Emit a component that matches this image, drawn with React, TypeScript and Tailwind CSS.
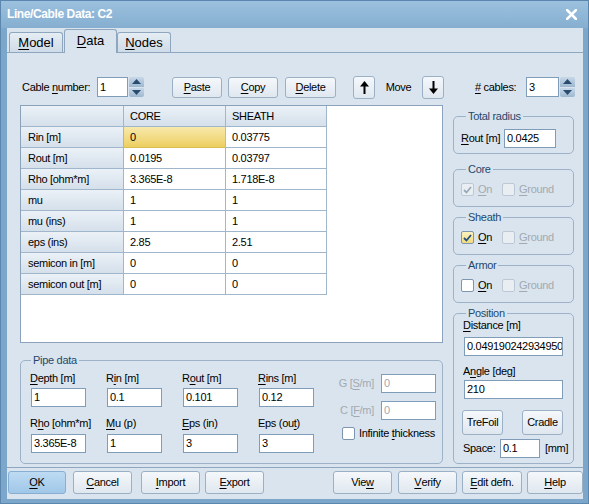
import React from "react";

type Kids = { children?: React.ReactNode };

function U({ children }: Kids) {
  return <span className="underline decoration-1 underline-offset-[2px]">{children}</span>;
}

function Button({
  children,
  className = "",
  primary = false,
}: Kids & { className?: string; primary?: boolean }) {
  return (
    <div
      className={`flex shrink-0 items-center justify-center rounded-[3px] border ${
        primary
          ? "border-[#86afd2] bg-linear-to-b from-[#bddbf3] to-[#a0c7e8]"
          : "border-[#9cb0c5] bg-linear-to-b from-[#f5f8fb] to-[#dfe7ef]"
      } ${className}`}
    >
      {children}
    </div>
  );
}

function Field({
  value,
  className = "",
  disabled = false,
}: {
  value: string;
  className?: string;
  disabled?: boolean;
}) {
  return (
    <div
      className={`flex shrink-0 items-center overflow-hidden whitespace-nowrap border border-[#7f9db9] bg-white pl-[2px] ${
        disabled ? "text-[#a3a9b0]" : "text-black"
      } ${className}`}
    >
      {value}
    </div>
  );
}

function Spinner() {
  return (
    <div className="flex h-[20px] w-[15px] shrink-0 flex-col gap-px">
      <div className="flex flex-1 items-center justify-center rounded-t-[2px] bg-linear-to-b from-[#c8d8e8] to-[#9db8d0]">
        <svg width="9" height="5" viewBox="0 0 9 5">
          <path d="M0 5 L4.5 0 L9 5Z" fill="#2a4c6e" />
        </svg>
      </div>
      <div className="flex flex-1 items-center justify-center rounded-b-[2px] bg-linear-to-b from-[#c8d8e8] to-[#9db8d0]">
        <svg width="9" height="5" viewBox="0 0 9 5">
          <path d="M0 0 L4.5 5 L9 0Z" fill="#2a4c6e" />
        </svg>
      </div>
    </div>
  );
}

function Box({
  checked = false,
  disabled = false,
  yellow = false,
}: {
  checked?: boolean;
  disabled?: boolean;
  yellow?: boolean;
}) {
  const cls = disabled
    ? "border-[#bcc8d4] bg-[#e9eef3]"
    : yellow
      ? "border-[#7d95ae] bg-linear-to-b from-[#fcf2bd] to-[#f1da7c]"
      : "border-[#7d95ae] bg-white";
  return (
    <span
      className={`flex h-[13px] w-[13px] shrink-0 items-center justify-center rounded-[2px] border ${cls}`}
    >
      {checked && (
        <svg width="9" height="8" viewBox="0 0 9 8">
          <path
            d="M1 4 L3.5 6.5 L8 1"
            fill="none"
            stroke={disabled ? "#9aa9b8" : "#254f80"}
            strokeWidth="1.8"
          />
        </svg>
      )}
    </span>
  );
}

function Group({
  title,
  className = "",
  legendClass = "ml-[5px]",
  children,
}: Kids & { title: string; className?: string; legendClass?: string }) {
  return (
    <fieldset className={`shrink-0 rounded-[5px] border border-[#9db2c7] ${className}`}>
      <legend className={`px-[2px] leading-[12px] text-[#24486c] ${legendClass}`}>{title}</legend>
      {children}
    </fieldset>
  );
}

function Arrow({ down = false }: { down?: boolean }) {
  return (
    <svg width="9" height="13" viewBox="0 0 9 13" className={down ? "rotate-180" : ""}>
      <path d="M4.5 0 L9 5.5 L0 5.5Z" fill="#000" />
      <rect x="3.5" y="4" width="2" height="9" fill="#000" />
    </svg>
  );
}

function ConductorRow({ title, on, disabledOn, yellow }: { title: string; on: boolean; disabledOn?: boolean; yellow?: boolean }) {
  return (
    <Group title={title} className="h-[44px] pl-[7px]">
      <div className="mt-[8px] flex h-[13px] items-center">
        <div className="flex w-[41px] items-center">
          <Box checked={on} disabled={disabledOn} yellow={yellow} />
          <span className={`ml-[4px] ${disabledOn ? "text-[#a3a9b0]" : ""}`}>
            <U>O</U>n
          </span>
        </div>
        <Box disabled />
        <span className="ml-[4px] text-[#a3a9b0]">
          <U>G</U>round
        </span>
      </div>
    </Group>
  );
}

const rows = [
  ["Rin [m]", "0", "0.03775"],
  ["Rout [m]", "0.0195", "0.03797"],
  ["Rho [ohm*m]", "3.365E-8", "1.718E-8"],
  ["mu", "1", "1"],
  ["mu (ins)", "1", "1"],
  ["eps (ins)", "2.85", "2.51"],
  ["semicon in [m]", "0", "0"],
  ["semicon out [m]", "0", "0"],
];

function PipeCol({
  top,
  topValue,
  bottom,
  bottomValue,
}: {
  top: React.ReactNode;
  topValue: string;
  bottom: React.ReactNode;
  bottomValue: string;
}) {
  return (
    <div className="flex w-[55px] flex-col">
      <div className="-ml-px h-[12px] whitespace-nowrap leading-[12px]">{top}</div>
      <Field value={topValue} className="mt-[4px] h-[19px] w-[55px]" />
      <div className="-ml-px mt-[10px] h-[12px] whitespace-nowrap leading-[12px]">{bottom}</div>
      <Field value={bottomValue} className="mt-[5px] h-[19px] w-[55px]" />
    </div>
  );
}

export default function App() {
  return (
    <div className="flex h-[504px] w-[589px] flex-col overflow-hidden border border-[#5b86ad] bg-[#7ca6ca] font-['Liberation_Sans',Arial,sans-serif] text-[11px] leading-[13px] tracking-[-0.3px] text-black">
      {/* title bar */}
      <div className="flex h-[27px] shrink-0 items-center justify-between bg-linear-to-b from-[#9cc1de] to-[#85aed0] pl-[6px] pr-[11px]">
        <span className="text-[12px] font-bold tracking-[-0.4px] text-white">Line/Cable Data: C2</span>
        <svg width="11" height="11" viewBox="0 0 11 11">
          <path d="M1 1 L10 10 M10 1 L1 10" stroke="#fff" strokeWidth="2.6" strokeLinecap="square" />
        </svg>
      </div>

      <div className="mb-[4px] ml-[6px] mr-[5px] flex flex-1 flex-col bg-[#dae4ee]">
        {/* tabs */}
        <div className="flex h-[25px] shrink-0 items-end border-b border-[#8ea7bf] pl-[2px] text-[13px] tracking-normal">
          <div className="flex h-[20px] w-[54px] items-center justify-center rounded-t-[3px] border border-b-0 border-[#8ea7bf] bg-linear-to-b from-[#e6edf4] to-[#cfdbe7]">
            <U>M</U>odel
          </div>
          <div className="relative z-10 -mb-px ml-px flex h-[24px] w-[53px] items-center justify-center rounded-t-[3px] border border-b-0 border-[#8ea7bf] bg-[#dae4ee] pb-[2px]">
            <U>D</U>ata
          </div>
          <div className="flex h-[20px] w-[54px] items-center justify-center rounded-t-[3px] border border-b-0 border-[#8ea7bf] bg-linear-to-b from-[#e6edf4] to-[#cfdbe7]">
            <U>N</U>odes
          </div>
        </div>

        {/* panel */}
        <div className="flex h-[415px] shrink-0 flex-col border-b border-[#8ea7bf] pl-[13px] pt-[23px]">
          {/* cable number row */}
          <div className="flex h-[22px] shrink-0 items-center">
            <span className="ml-[2px] w-[75px] whitespace-nowrap">
              Cable <U>n</U>umber:
            </span>
            <Field value="1" className="h-[20px] w-[31px]" />
            <div className="ml-px">
              <Spinner />
            </div>
            <Button className="ml-[28px] h-[21px] w-[50px]">
              <U>P</U>aste
            </Button>
            <Button className="ml-[6px] h-[21px] w-[50px]">
              <U>C</U>opy
            </Button>
            <Button className="ml-[7px] h-[21px] w-[51px]">
              <U>D</U>elete
            </Button>
            <Button className="ml-[17px] h-[23px] w-[22px]">
              <Arrow />
            </Button>
            <span className="w-[47px] text-center">Move</span>
            <Button className="h-[23px] w-[22px]">
              <Arrow down />
            </Button>
            <span className="ml-[31px] w-[51px] whitespace-nowrap">
              <U>#</U> cables:
            </span>
            <Field value="3" className="h-[20px] w-[33px]" />
            <div className="ml-px">
              <Spinner />
            </div>
          </div>

          {/* columns */}
          <div className="flex items-start">
            {/* left column */}
            <div className="mt-[7px] flex w-[423px] shrink-0 flex-col">
              <div className="h-[238px] border border-[#8aa2ba] bg-white">
                <div className="grid grid-cols-[103px_102px_101px]">
                  <div className="h-[21px] border-b border-r border-[#9fb6cc] bg-linear-to-b from-[#ebf1f7] to-[#d5e0eb]" />
                  <div className="flex h-[21px] items-center border-b border-r border-[#9fb6cc] bg-linear-to-b from-[#ebf1f7] to-[#d5e0eb] pl-[6px]">
                    CORE
                  </div>
                  <div className="flex h-[21px] items-center border-b border-r border-[#9fb6cc] bg-linear-to-b from-[#ebf1f7] to-[#d5e0eb] pl-[6px]">
                    SHEATH
                  </div>
                  {rows.map((r, i) => (
                    <React.Fragment key={r[0]}>
                      <div className="flex h-[21px] items-center whitespace-nowrap border-b border-r border-[#9fb6cc] bg-linear-to-b from-[#ebf1f7] to-[#d5e0eb] pl-[7px]">
                        {r[0]}
                      </div>
                      <div
                        className={`flex h-[21px] items-center border-b border-r pl-[6px] ${
                          i === 0
                            ? "border-[#d9bd55] bg-linear-to-b from-[#f8e9ab] to-[#edcf5e]"
                            : "border-[#9fb6cc]"
                        }`}
                      >
                        {r[1]}
                      </div>
                      <div className="flex h-[21px] items-center border-b border-r border-[#9fb6cc] pl-[6px]">
                        {r[2]}
                      </div>
                    </React.Fragment>
                  ))}
                </div>
              </div>

              <Group title="Pipe data" className="mt-[11px] h-[110px] pl-[10px]" legendClass="ml-0">
                <div className="flex pt-[6px]">
                  <div className="flex gap-x-[21px]">
                    <PipeCol
                      top={<><U>D</U>epth [m]</>}
                      topValue="1"
                      bottom={<>R<U>h</U>o [ohm*m]</>}
                      bottomValue="3.365E-8"
                    />
                    <PipeCol
                      top={<>R<U>i</U>n [m]</>}
                      topValue="0.1"
                      bottom={<><U>M</U>u (p)</>}
                      bottomValue="1"
                    />
                    <PipeCol
                      top={<>R<U>o</U>ut [m]</>}
                      topValue="0.101"
                      bottom={<><U>E</U>ps (in)</>}
                      bottomValue="3"
                    />
                    <PipeCol
                      top={<><U>R</U>ins [m]</>}
                      topValue="0.12"
                      bottom={<>Eps (ou<U>t</U>)</>}
                      bottomValue="3"
                    />
                  </div>
                  <div className="ml-[6px] flex w-[116px] flex-col">
                    <div className="mt-[2px] flex h-[19px] items-center justify-end">
                      <span className="text-[#a3a9b0]">
                        G [<U>S</U>/m]
                      </span>
                      <Field value="0" disabled className="ml-[7px] h-[19px] w-[55px]" />
                    </div>
                    <div className="mt-[8px] flex h-[19px] items-center justify-end">
                      <span className="text-[#a3a9b0]">
                        C [<U>F</U>/m]
                      </span>
                      <Field value="0" disabled className="ml-[7px] h-[19px] w-[55px]" />
                    </div>
                    <div className="ml-[22px] mt-[7px] flex h-[13px] items-center whitespace-nowrap">
                      <Box />
                      <span className="ml-[4px]">
                        Infinite <U>t</U>hickness
                      </span>
                    </div>
                  </div>
                </div>
              </Group>
            </div>

            {/* right column */}
            <div className="ml-[10px] mt-[12px] flex w-[121px] shrink-0 flex-col">
              <Group title="Total radius" className="h-[44px] pl-[7px]">
                <div className="mt-[7px] flex h-[19px] items-center">
                  <span className="w-[43px] whitespace-nowrap">
                    <U>R</U>out [m]
                  </span>
                  <Field value="0.0425" className="h-[19px] w-[52px]" />
                </div>
              </Group>
              <div className="mt-[9px]">
                <ConductorRow title="Core" on disabledOn />
              </div>
              <div className="mt-[4px]">
                <ConductorRow title="Sheath" on yellow />
              </div>
              <div className="mt-[4px]">
                <ConductorRow title="Armor" on={false} />
              </div>
              <Group title="Position" className="mt-[4px] h-[157px] pl-[7px]">
                <div className="flex flex-col pl-[2px]">
                  <span className="h-[13px] whitespace-nowrap">
                    <U>D</U>istance [m]
                  </span>
                  <Field value="0.0491902429349505" className="ml-px mt-[5px] h-[19px] w-[99px]" />
                  <span className="mt-[9px] h-[13px] whitespace-nowrap">
                    A<U>n</U>gle [deg]
                  </span>
                  <Field value="210" className="ml-px mt-[2px] h-[19px] w-[99px]" />
                  <div className="mt-[11px] flex">
                    <Button className="-ml-px h-[25px] w-[41px]">TreFoil</Button>
                    <Button className="ml-[19px] h-[25px] w-[41px]">Cradle</Button>
                  </div>
                  <div className="mt-[4px] flex h-[19px] items-center">
                    <span className="w-[37px]">Space:</span>
                    <Field value="0.1" className="h-[19px] w-[40px]" />
                    <span className="ml-[5px]">[mm]</span>
                  </div>
                </div>
              </Group>
            </div>
          </div>
        </div>

        {/* bottom buttons */}
        <div className="flex flex-1 items-start pt-[3px]">
          <Button primary className="ml-px h-[23px] w-[58px]">
            <U>O</U>K
          </Button>
          <Button className="ml-[7px] h-[23px] w-[59px]">
            <U>C</U>ancel
          </Button>
          <Button className="ml-[9px] h-[23px] w-[59px]">
            <U>I</U>mport
          </Button>
          <Button className="ml-[5px] h-[23px] w-[59px]">
            <U>E</U>xport
          </Button>
          <Button className="ml-[69px] h-[23px] w-[59px]">
            Vie<U>w</U>
          </Button>
          <Button className="ml-[6px] h-[23px] w-[59px]">
            <U>V</U>erify
          </Button>
          <Button className="ml-[5px] h-[23px] w-[60px]">
            <U>E</U>dit defn.
          </Button>
          <Button className="ml-[5px] h-[23px] w-[56px]">
            <U>H</U>elp
          </Button>
        </div>
      </div>
    </div>
  );
}
